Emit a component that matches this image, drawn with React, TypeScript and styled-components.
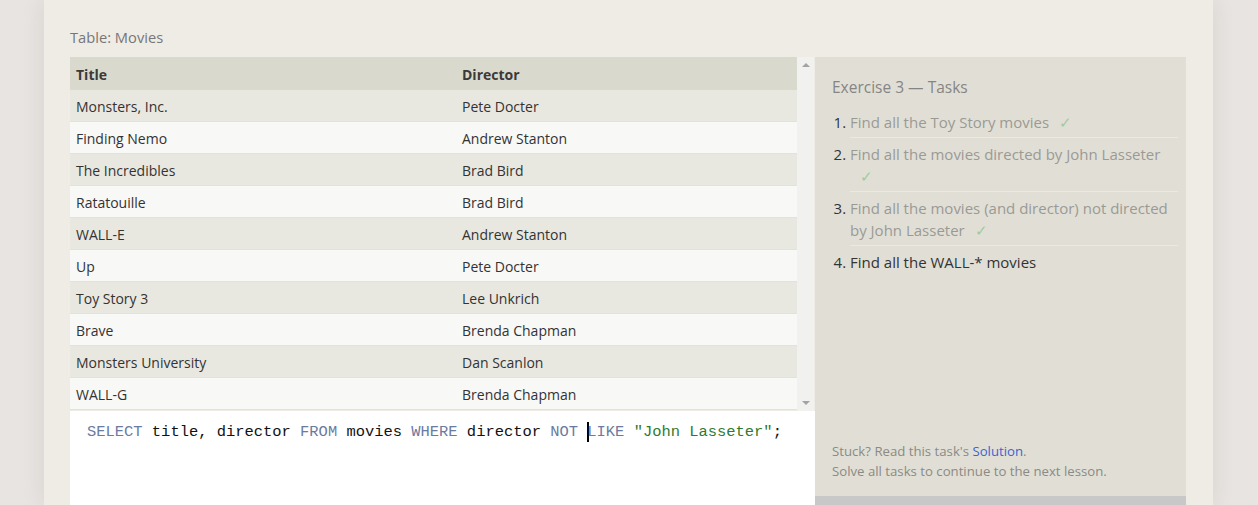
import React from "react";
import styled, { createGlobalStyle } from "styled-components";

const Global = createGlobalStyle`
  html, body { margin: 0; padding: 0; }
  body {
    background: #e8e4e1;
    font-family: "Open Sans", "Noto Sans", sans-serif;
    overflow: hidden;
    height: 505px;
  }
`;

const Page = styled.div`
  padding-left: 44px;
  height: 505px;
`;

const Card = styled.div`
  width: 1169px;
  height: 505px;
  box-sizing: border-box;
  background: #efece6;
  box-shadow: 0 0 22px rgba(60, 40, 30, 0.09);
  padding: 27px 27px 0 26px;
`;

const Label = styled.div`
  font-size: 14.7px;
  color: #777;
  line-height: 20px;
  height: 30px;
`;

const Row = styled.div`
  display: flex;
  align-items: flex-start;
`;

const LeftCol = styled.div`
  width: 745px;
  display: flex;
  flex-direction: column;
`;

const TableArea = styled.div`
  display: flex;
  height: 354px;
`;

const Table = styled.div`
  width: 727px;
  display: flex;
  flex-direction: column;
`;

const TRow = styled.div<{ $variant: "head" | "odd" | "even" }>`
  display: grid;
  grid-template-columns: 386px 1fr;
  height: ${(p) => (p.$variant === "head" ? "33px" : "32px")};
  box-sizing: border-box;
  align-items: center;
  padding-top: 1px;
  background: ${(p) =>
    p.$variant === "head" ? "#dad9ce" : p.$variant === "odd" ? "#e9e8e0" : "#f8f8f7"};
  border-bottom: ${(p) => (p.$variant === "head" ? "none" : "1px solid #e2e1da")};
  font-weight: ${(p) => (p.$variant === "head" ? 700 : 400)};
  color: ${(p) => (p.$variant === "head" ? "#3a3a3a" : "#333")};
  font-size: 14px;
`;

const Cell = styled.div`
  padding-left: 6px;
  white-space: nowrap;
`;

const Scrollbar = styled.div`
  width: 17px;
  background: #f1f1f0;
  display: flex;
  flex-direction: column;
  justify-content: space-between;
  align-items: center;
  padding: 6px 0;
  box-sizing: border-box;
`;

const Arrow = styled.div<{ $down?: boolean }>`
  width: 0;
  height: 0;
  border-left: 4px solid transparent;
  border-right: 4px solid transparent;
  ${(p) => (p.$down ? "border-top: 4px solid #a3a3a3;" : "border-bottom: 4px solid #a3a3a3;")}
`;

const Editor = styled.div`
  background: #ffffff;
  height: 94px;
  padding: 11px 0 0 17px;
  font-family: "Liberation Mono", "DejaVu Sans Mono", monospace;
  font-size: 15.45px;
  line-height: 20px;
  color: #111;
  white-space: pre;
`;

const Kw = styled.span`
  color: #6b7ba0;
`;

const Str = styled.span`
  color: #2f7a2f;
`;

const Caret = styled.span`
  display: inline-block;
  width: 2px;
  height: 20px;
  background: #000;
  vertical-align: top;
  margin-right: -2px;
`;

const RightCol = styled.div`
  width: 371px;
  display: flex;
  flex-direction: column;
`;

const Panel = styled.div`
  background: #e1dfd5;
  height: 439px;
  box-sizing: border-box;
  padding: 19px 8px 0 17px;
  display: flex;
  flex-direction: column;
`;

const Heading = styled.div`
  font-size: 15.5px;
  color: #858585;
  line-height: 22px;
  margin-bottom: 8px;
`;

const TaskList = styled.ol`
  margin: 0;
  padding: 0 0 0 18px;
  list-style: decimal;
`;

const Task = styled.li<{ $done?: boolean; $last?: boolean }>`
  font-size: 15px;
  line-height: 22px;
  padding: 5px 0 4px;
  color: ${(p) => (p.$done ? "#9a9a95" : "#333")};
  border-bottom: ${(p) => (p.$last ? "none" : "1px solid #ebe9e2")};
  &::marker {
    color: #333;
  }
`;

const Check = styled.span`
  display: inline-block;
  height: 22px;
  line-height: 22px;
  vertical-align: top;
  overflow: hidden;
  color: #9ccc9c;
  margin-left: 10px;
`;

const Footer = styled.div`
  margin-top: auto;
  padding-bottom: 15px;
  font-size: 13.2px;
  line-height: 20px;
  color: #8a8a86;
`;

const Link = styled.a`
  color: #3b63d1;
  text-decoration: none;
`;

const GrayBar = styled.div`
  height: 20px;
  background: #c8c8c8;
`;

const movies: [string, string][] = [
  ["Monsters, Inc.", "Pete Docter"],
  ["Finding Nemo", "Andrew Stanton"],
  ["The Incredibles", "Brad Bird"],
  ["Ratatouille", "Brad Bird"],
  ["WALL-E", "Andrew Stanton"],
  ["Up", "Pete Docter"],
  ["Toy Story 3", "Lee Unkrich"],
  ["Brave", "Brenda Chapman"],
  ["Monsters University", "Dan Scanlon"],
  ["WALL-G", "Brenda Chapman"],
];

export default function App() {
  return (
    <>
      <Global />
      <Page>
        <Card>
          <Label>Table: Movies</Label>
          <Row>
            <LeftCol>
              <TableArea>
                <Table>
                  <TRow $variant="head">
                    <Cell>Title</Cell>
                    <Cell>Director</Cell>
                  </TRow>
                  {movies.map(([t, d], i) => (
                    <TRow key={t} $variant={i % 2 === 0 ? "odd" : "even"}>
                      <Cell>{t}</Cell>
                      <Cell>{d}</Cell>
                    </TRow>
                  ))}
                </Table>
                <Scrollbar>
                  <Arrow />
                  <Arrow $down />
                </Scrollbar>
              </TableArea>
              <Editor>
                <Kw>SELECT</Kw> title, director <Kw>FROM</Kw> movies <Kw>WHERE</Kw> director{" "}
                <Kw>NOT</Kw> <Caret />
                <Kw>LIKE</Kw> <Str>"John Lasseter"</Str>;
              </Editor>
            </LeftCol>
            <RightCol>
              <Panel>
                <Heading>Exercise 3 — Tasks</Heading>
                <TaskList>
                  <Task $done>
                    Find all the Toy Story movies<Check>✓</Check>
                  </Task>
                  <Task $done>
                    Find all the movies directed by John Lasseter<Check>✓</Check>
                  </Task>
                  <Task $done>
                    Find all the movies (and director) not directed by John Lasseter
                    <Check>✓</Check>
                  </Task>
                  <Task $last>Find all the WALL-* movies</Task>
                </TaskList>
                <Footer>
                  Stuck? Read this task's <Link href="#">Solution</Link>.
                  <br />
                  Solve all tasks to continue to the next lesson.
                </Footer>
              </Panel>
              <GrayBar />
            </RightCol>
          </Row>
        </Card>
      </Page>
    </>
  );
}
